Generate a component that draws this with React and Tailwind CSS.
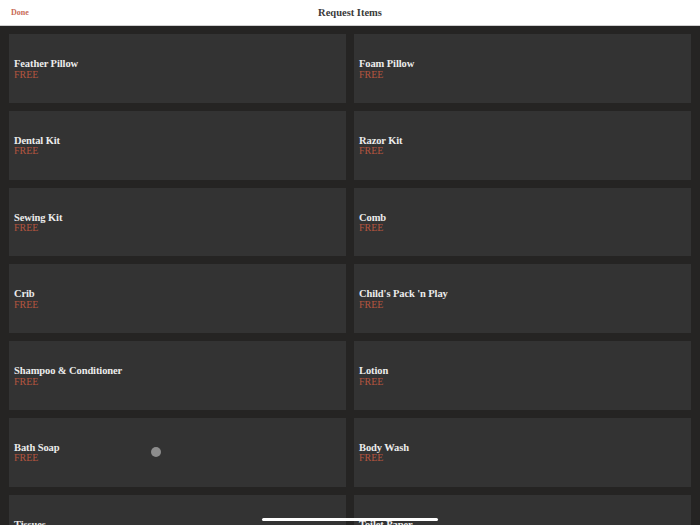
import React from 'react';

const items = [
  'Feather Pillow', 'Foam Pillow',
  'Dental Kit', 'Razor Kit',
  'Sewing Kit', 'Comb',
  'Crib', "Child's Pack 'n Play",
  'Shampoo & Conditioner', 'Lotion',
  'Bath Soap', 'Body Wash',
  'Tissues', 'Toilet Paper',
];

const serif = { fontFamily: '"Liberation Serif", "DejaVu Serif", serif' };

export default function App() {
  return (
    <div className="relative w-[700px] h-[525px] overflow-hidden bg-[#252423]" style={serif}>
      {/* Header */}
      <div className="h-[26px] bg-white border-b border-[#cfcfcf] flex items-center relative">
        <button className="ml-[11px] text-[8px] text-[#c86a55] font-semibold">Done</button>
        <h1 className="absolute left-1/2 -translate-x-1/2 text-[10.5px] font-semibold text-[#3a3a3a]">Request Items</h1>
      </div>

      {/* Grid */}
      <div className="grid grid-cols-2 gap-[8px] px-[9px] pt-[8px]">
        {items.map((name) => (
          <div key={name} className="h-[68.75px] bg-[#333333] flex flex-col justify-center px-[5px] pt-[2px]">
            <div className="text-[10.5px] leading-[10px] font-bold text-[#ececec] tracking-[-0.1px]">{name}</div>
            <div className="text-[10px] leading-[10px] mt-[0.5px] text-[#b5553f]">FREE</div>
          </div>
        ))}
      </div>

      {/* touch indicator */}
      <div className="absolute left-[151px] top-[447px] w-[10px] h-[10px] rounded-full bg-[#8d8d8d]"></div>
      {/* home indicator */}
      <div className="absolute left-[262px] top-[518px] w-[176px] h-[3px] rounded-full bg-white"></div>
    </div>
  );
}
